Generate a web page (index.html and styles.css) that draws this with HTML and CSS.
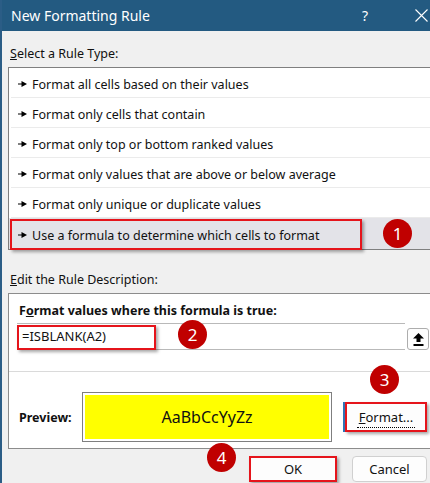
FILE: index.html
```html
<!DOCTYPE html>
<html lang="en">
<head>
    <meta charset="UTF-8">
    <title>New Formatting Rule</title>
    <link rel="stylesheet" href="styles.css">
</head>
<body>
    <div class="window">
        <div class="titlebar">
            <span class="title">New Formatting Rule</span>
            <span class="help">?</span>
            <svg class="close" width="13" height="13" viewBox="0 0 13 13">
                <path d="M0.5 0.5 L12.5 12.5 M12.5 0.5 L0.5 12.5" stroke="#fff" stroke-width="1.1" fill="none"/>
            </svg>
        </div>

        <div class="content">
            <div class="group-label"><u>S</u>elect a Rule Type:</div>
            <ul class="rule-list">
                <li><svg class="arrow" width="9" height="6" viewBox="0 0 9 6"><path d="M0 2.5h4v1H0z M3.5 0 L9 3 L3.5 6z" fill="#000"/></svg>Format all cells based on their values</li>
                <li><svg class="arrow" width="9" height="6" viewBox="0 0 9 6"><path d="M0 2.5h4v1H0z M3.5 0 L9 3 L3.5 6z" fill="#000"/></svg>Format only cells that contain</li>
                <li><svg class="arrow" width="9" height="6" viewBox="0 0 9 6"><path d="M0 2.5h4v1H0z M3.5 0 L9 3 L3.5 6z" fill="#000"/></svg>Format only top or bottom ranked values</li>
                <li><svg class="arrow" width="9" height="6" viewBox="0 0 9 6"><path d="M0 2.5h4v1H0z M3.5 0 L9 3 L3.5 6z" fill="#000"/></svg>Format only values that are above or below average</li>
                <li><svg class="arrow" width="9" height="6" viewBox="0 0 9 6"><path d="M0 2.5h4v1H0z M3.5 0 L9 3 L3.5 6z" fill="#000"/></svg>Format only unique or duplicate values</li>
                <li class="selected"><svg class="arrow" width="9" height="6" viewBox="0 0 9 6"><path d="M0 2.5h4v1H0z M3.5 0 L9 3 L3.5 6z" fill="#000"/></svg>Use a formula to determine which cells to format</li>
            </ul>

            <div class="group-label"><u>E</u>dit the Rule Description:</div>
            <div class="desc-box">
                <div class="desc-top">
                    <div class="desc-title">F<u>o</u>rmat values where this formula is true:</div>
                    <div class="formula-row">
                        <div class="formula">=ISBLANK(A2)</div>
                        <button class="ref-btn">
                            <svg width="11" height="13" viewBox="0 0 11 13">
                                <path d="M5.5 0 L11 5.5 H7.5 V9 H3.5 V5.5 H0 Z" fill="#000"/>
                                <rect x="0.5" y="11" width="10" height="2" fill="#000"/>
                            </svg>
                        </button>
                    </div>
                </div>
                <div class="desc-bottom">
                    <span class="preview-label">Preview:</span>
                    <div class="preview-box">
                        <div class="preview-fill">AaBbCcYyZz</div>
                    </div>
                    <button class="format-btn"><span class="focus"><u>F</u>ormat...</span></button>
                </div>
            </div>

            <div class="buttons">
                <button class="btn ok">OK</button>
                <button class="btn cancel">Cancel</button>
            </div>
        </div>

        <!-- annotations drawn over the dialog -->
        <div class="hl hl-rule"></div>
        <div class="hl hl-formula"></div>
        <div class="badge b1">1</div>
        <div class="badge b2">2</div>
        <div class="badge b3">3</div>
        <div class="badge b4">4</div>
    </div>
</body>
</html>
```

FILE: styles.css
```css
body {
    margin: 0;
    padding: 0;
    font-family: "Noto Sans", "Segoe UI", sans-serif;
    font-size: 12.5px;
    color: #111;
    background-color: #f0f0f0;
    overflow: hidden;
}
.window {
    position: relative;
    height: 483px;
    border-left: 2px solid #2b5d86;
    background: #f0f0f0;
    overflow: hidden;
}
.titlebar {
    height: 31px;
    background: #235a81;
    color: #fff;
    display: flex;
    align-items: center;
    padding-left: 9px;
}
.title {
    flex: 1;
    font-size: 14px;
}
.help {
    font-size: 14px;
    margin-right: 47px;
}
.close {
    margin-right: 2px;
}
.content {
    padding-left: 6px;
}
.group-label {
    margin: 15px 0 5px 2px;
    line-height: 16px;
}
.rule-list {
    list-style: none;
    margin: 0 -8px 0 0;
    padding: 0;
    border: 1px solid #7f7f7f;
    background: #fff;
}
.rule-list li {
    box-sizing: border-box;
    height: 30px;
    padding: 3px 0 0 7px;
    margin-left: 2px;
    border-bottom: 1px solid #ebebeb;
    display: flex;
    align-items: center;
    white-space: nowrap;
}
.rule-list li.selected {
    height: 31px;
    border-bottom: 0;
    margin-left: 0;
    padding-left: 9px;
    background: #e3e3e8;
}
.arrow {
    margin-right: 5px;
    margin-bottom: 1px;
}
.rule-list + .group-label {
    margin-top: 22px;
}
.desc-box {
    margin-right: -8px;
    border: 1px solid #8c8c8c;
    background: #fff;
}
.desc-top {
    padding: 9px 0 21px 10px;
    border-bottom: 1px solid #dadada;
}
.desc-title {
    font-weight: bold;
    line-height: 16px;
}
.formula-row {
    display: flex;
    margin: 4px 8px 0 -2px;
    height: 27px;
}
.formula {
    flex: 1;
    box-sizing: border-box;
    border-top: 1px solid #b9b9b9;
    border-bottom: 1px solid #b9b9b9;
    padding-left: 5px;
    line-height: 25px;
    font-size: 13px;
}
.ref-btn {
    align-self: flex-end;
    width: 22px;
    height: 22px;
    margin: 0 0 0 2px;
    padding: 0;
    border: 1px solid #adadad;
    border-radius: 3px;
    background: #fdfdfd;
    display: flex;
    align-items: center;
    justify-content: center;
}
.desc-bottom {
    display: flex;
    align-items: center;
    padding: 20px 0 6px 10px;
}
.preview-label {
    width: 63px;
    font-weight: bold;
}
.preview-box {
    width: 250px;
    height: 50px;
    box-sizing: border-box;
    border: 1px solid #7f7f7f;
    padding: 2px;
}
.preview-fill {
    height: 100%;
    background: #ffff00;
    display: flex;
    align-items: center;
    justify-content: center;
    font-size: 16px;
}
.format-btn {
    margin-left: 13px;
    width: 82px;
    height: 30px;
    box-sizing: border-box;
    border: 2px solid #e5141b;
    background: #fdfdfd;
    font-family: inherit;
    font-size: 13px;
    color: #111;
    box-shadow: -2px 0 0 #2f73b5, 2px 2px 3px rgba(0, 0, 0, 0.35);
    padding: 0;
}
.format-btn .focus {
    border-bottom: 1px dotted #000;
    padding: 0 2px 1px;
}
.buttons {
    display: flex;
    justify-content: flex-end;
    gap: 15px;
    margin-top: 7px;
    padding-right: 3px;
}
.btn {
    height: 26px;
    box-sizing: border-box;
    background: #fdfdfd;
    font-family: inherit;
    font-size: 13px;
    color: #111;
    padding: 0;
}
.ok {
    width: 88px;
    border: 2px solid #e5141b;
    box-shadow: 2px 2px 3px rgba(0, 0, 0, 0.35);
}
.cancel {
    width: 75px;
    border: 1px solid #d0d0d0;
    border-radius: 4px;
}
.hl {
    position: absolute;
    box-sizing: border-box;
    border: 2px solid #e5141b;
    box-shadow: 2px 2px 3px rgba(0, 0, 0, 0.35);
}
.hl-rule {
    left: 8px;
    top: 219px;
    width: 352px;
    height: 31px;
}
.hl-formula {
    left: 15px;
    top: 325px;
    width: 139px;
    height: 25px;
}
.badge {
    position: absolute;
    width: 29px;
    height: 29px;
    border-radius: 50%;
    background: #c00000;
    color: #fff;
    font-size: 17px;
    line-height: 29px;
    text-align: center;
}
.b1 { left: 381px; top: 219px; }
.b2 { left: 176px; top: 320px; }
.b3 { left: 368px; top: 365px; }
.b4 { left: 205px; top: 443px; }
```
